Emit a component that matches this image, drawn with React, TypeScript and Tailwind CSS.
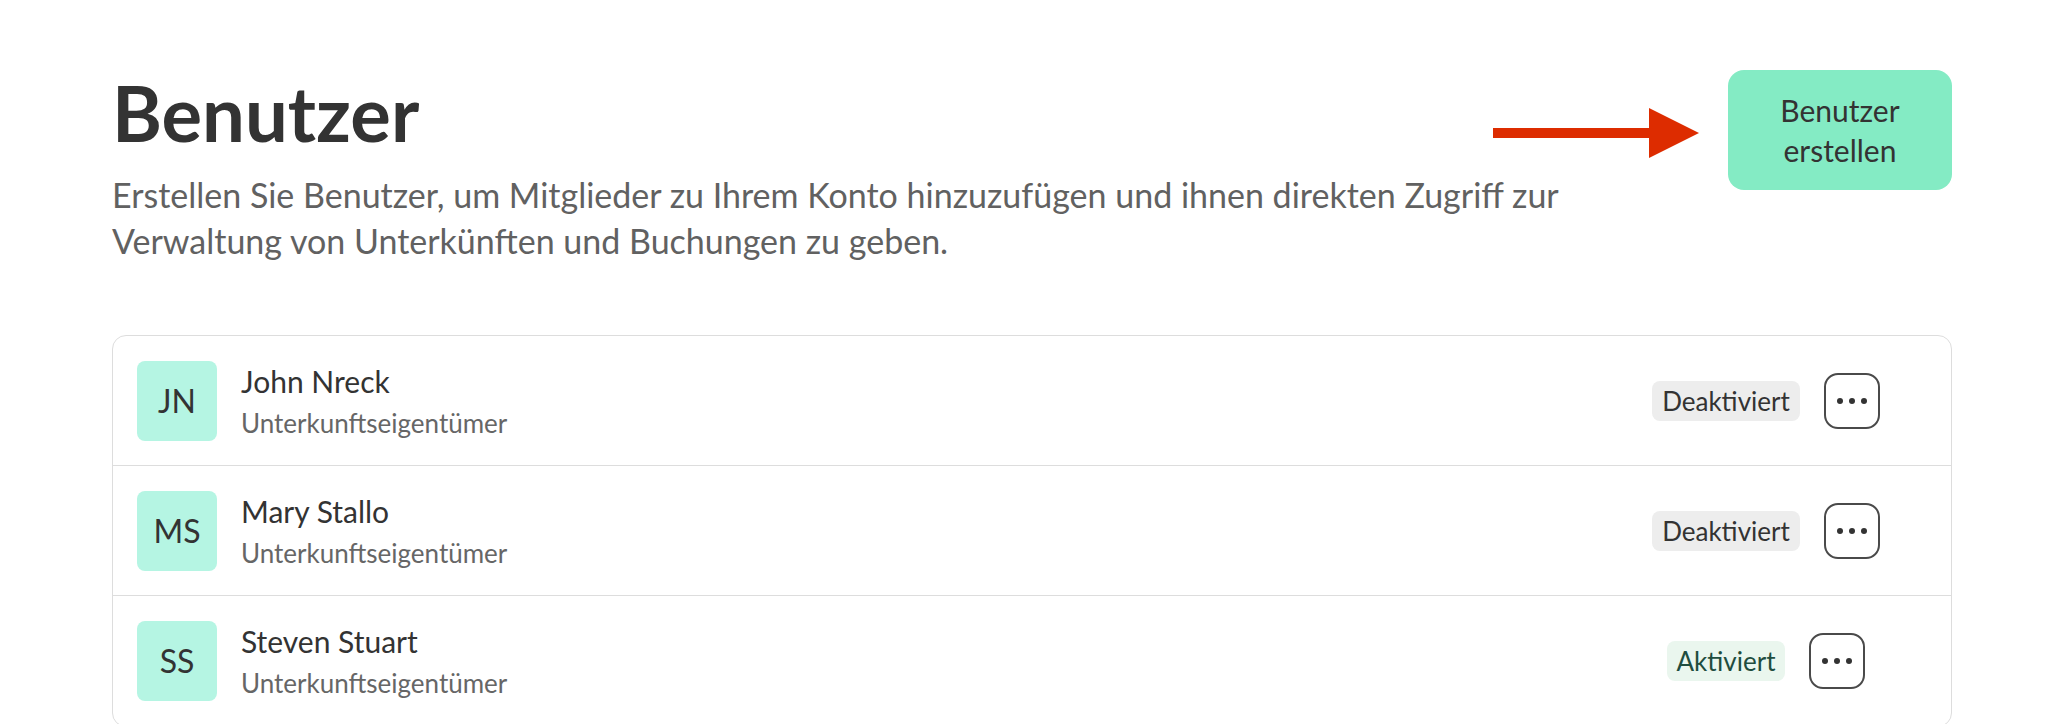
const USERS = [
  { initials: 'JN', name: 'John Nreck', role: 'Unterkunftseigentümer', active: false },
  { initials: 'MS', name: 'Mary Stallo', role: 'Unterkunftseigentümer', active: false },
  { initials: 'SS', name: 'Steven Stuart', role: 'Unterkunftseigentümer', active: true },
]

function MoreButton() {
  return (
    <button
      type="button"
      className="w-[56px] h-[56px] rounded-[14px] border-2 border-[#4a4a4a] flex items-center justify-center gap-[6px] bg-white"
    >
      <span className="w-[6px] h-[6px] rounded-full bg-[#333]" />
      <span className="w-[6px] h-[6px] rounded-full bg-[#333]" />
      <span className="w-[6px] h-[6px] rounded-full bg-[#333]" />
    </button>
  )
}

export default function App() {
  return (
    <div className="min-h-screen bg-white text-[#333] font-['Lato','Noto_Sans',sans-serif]">
      <div className="px-[112px] pt-[70px]">

        {/* Kopfzeile */}
        <div className="flex items-start justify-between">
          <div>
            <h1 className="mt-[5px] text-[76px] leading-none font-bold text-[#333]">Benutzer</h1>
            <p className="mt-[21px] max-w-[1500px] text-[34px] leading-[46px] text-[#616161]">
              Erstellen Sie Benutzer, um Mitglieder zu Ihrem Konto hinzuzufügen und ihnen direkten Zugriff zur
              Verwaltung von Unterkünften und Buchungen zu geben.
            </p>
          </div>

          <div className="relative shrink-0">
            {/* Hinweispfeil */}
            <svg
              className="absolute right-[calc(100%+29px)] top-[38px]"
              width="206"
              height="50"
              viewBox="0 0 206 50"
            >
              <rect x="0" y="20" width="160" height="10" fill="#dd2c00" />
              <polygon points="156,0 206,25 156,50" fill="#dd2c00" />
            </svg>
            <button
              type="button"
              className="w-[224px] h-[120px] rounded-[16px] bg-[#84ebc4] text-[30px] leading-[40px] text-[#333]"
            >
              Benutzer<br />erstellen
            </button>
          </div>
        </div>

        {/* Benutzerliste */}
        <div className="mt-[71px] border border-[#dddddd] rounded-[14px]">
          {USERS.map(u => (
            <div key={u.initials} className="h-[130px] flex items-center px-6 border-b border-[#dddddd]">
              <div className="w-20 h-20 rounded-[8px] bg-[#b5f5e3] flex items-center justify-center text-[32px] text-[#333] shrink-0">
                {u.initials}
              </div>
              <div className="ml-6 flex-1 min-w-0">
                <div className="text-[30px] leading-[38px] text-[#333]">{u.name}</div>
                <div className="mt-[6px] text-[26px] leading-[34px] text-[#666]">{u.role}</div>
              </div>
              <div className="w-[370px] -mr-6 flex items-center justify-center gap-6">
                {u.active ? (
                  <span className="px-[10px] h-[40px] leading-[40px] rounded-[8px] bg-[#eaf6ee] text-[26px] text-[#1f4d3f]">
                    Aktiviert
                  </span>
                ) : (
                  <span className="px-[10px] h-[40px] leading-[40px] rounded-[8px] bg-[#ededed] text-[26px] text-[#333]">
                    Deaktiviert
                  </span>
                )}
                <MoreButton />
              </div>
            </div>
          ))}
        </div>
      </div>
    </div>
  )
}
